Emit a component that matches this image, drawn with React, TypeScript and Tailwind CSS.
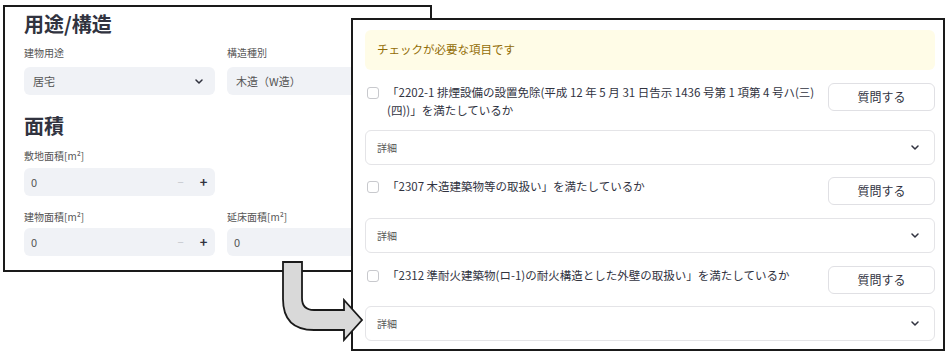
import { ReactNode } from "react";

const font = { fontFamily: '"Noto Sans CJK JP", "Noto Sans", sans-serif' };

function Chevron() {
  return (
    <svg width="8" height="5" viewBox="0 0 8 5" className="shrink-0">
      <path d="M1 1 L4 4 L7 1" fill="none" stroke="#31333f" strokeWidth="1.5" strokeLinecap="round" strokeLinejoin="round" />
    </svg>
  );
}

function Label({ children }: { children: ReactNode }) {
  return <div className="text-[10px] leading-[14px] text-[#555]">{children}</div>;
}

function SelectBox({ value }: { value: string }) {
  return (
    <div className="flex items-center justify-between h-[28px] rounded-md bg-[#f0f2f6] pl-[9px] pr-[12px] text-[11px] text-[#555]">
      <span>{value}</span>
      <Chevron />
    </div>
  );
}

// stepper is left off where the field sits under the other window
function NumberBox({ stepper = true }: { stepper?: boolean }) {
  return (
    <div className="flex items-center h-[28px] rounded-md bg-[#f0f2f6] pl-[7px] text-[11px] text-[#555]">
      <span className="flex-1">0</span>
      {stepper && (
        <div className="flex items-center">
          <span className="w-[23px] text-center text-[#c4c6cc]">−</span>
          <span className="w-[23px] text-center text-[13px] font-bold text-[#31333f]">+</span>
        </div>
      )}
    </div>
  );
}

function Expander() {
  return (
    <div className="flex items-center justify-between h-[35px] rounded-md border border-[#e4e4e7] pl-[11px] pr-[15px]">
      <span className="text-[10px] text-[#555]">詳細</span>
      <Chevron />
    </div>
  );
}

function CheckRow({ children }: { children: ReactNode }) {
  return (
    <div className="flex items-start">
      <div className="mt-[4px] ml-[2px] w-[12px] h-[12px] shrink-0 rounded-[3px] border border-[#c8c9cd] bg-white" />
      <div className="ml-[8px] flex-1 min-w-0 text-[11.5px] leading-[18px] text-[#31333f] whitespace-nowrap">{children}</div>
      <button className="ml-[8px] w-[107px] h-[28px] shrink-0 rounded-md border border-[#e0e0e4] bg-white text-[12px] text-[#31333f]">
        質問する
      </button>
    </div>
  );
}

export default function App() {
  return (
    <div className="relative w-[952px] h-[357px] bg-white overflow-hidden" style={font}>
      {/* input form window */}
      <section className="absolute left-[3px] top-[5px] w-[429px] h-[267px] border-2 border-[#1a1a1a] bg-white overflow-hidden pl-[19px] pt-[3px]">
        <h2 className="text-[20px] leading-[28px] font-bold text-[#31333f]">用途/構造</h2>
        <div className="grid grid-cols-[191px_191px] gap-x-[12px] mt-[8px]">
          <div>
            <Label>建物用途</Label>
            <div className="mt-[7px]">
              <SelectBox value="居宅" />
            </div>
          </div>
          <div>
            <Label>構造種別</Label>
            <div className="mt-[7px]">
              <SelectBox value="木造（W造）" />
            </div>
          </div>
        </div>
        <h2 className="mt-[17px] text-[20px] leading-[28px] font-bold text-[#31333f]">面積</h2>
        <div className="w-[191px] mt-[9px]">
          <Label>敷地面積[m²]</Label>
          <div className="mt-[5px]">
            <NumberBox />
          </div>
        </div>
        <div className="grid grid-cols-[191px_191px] gap-x-[12px] mt-[14px]">
          <div>
            <Label>建物面積[m²]</Label>
            <div className="mt-[4px]">
              <NumberBox />
            </div>
          </div>
          <div>
            <Label>延床面積[m²]</Label>
            <div className="mt-[4px]">
              <NumberBox stepper={false} />
            </div>
          </div>
        </div>
      </section>

      {/* check result window */}
      <section className="absolute left-[351px] top-[18px] w-[594px] h-[333px] border-2 border-[#1a1a1a] bg-white pl-[12px] pr-[8px] pt-[10px] flex flex-col">
        <div className="flex items-center h-[40px] rounded-md bg-[#fffce7] pl-[12px] text-[11.5px] text-[#926c05]">
          チェックが必要な項目です
        </div>
        <div className="mt-[13px]">
          <CheckRow>
            「2202-1 排煙設備の設置免除(平成 12 年 5 月 31 日告示 1436 号第 1 項第 4 号ハ(三)
            <br />
            (四))」を満たしているか
          </CheckRow>
        </div>
        <div className="mt-[11px]">
          <Expander />
        </div>
        <div className="mt-[12px]">
          <CheckRow>「2307 木造建築物等の取扱い」を満たしているか</CheckRow>
        </div>
        <div className="mt-[13px]">
          <Expander />
        </div>
        <div className="mt-[13px]">
          <CheckRow>「2312 準耐火建築物(ロ-1)の耐火構造とした外壁の取扱い」を満たしているか</CheckRow>
        </div>
        <div className="mt-[12px]">
          <Expander />
        </div>
      </section>

      {/* arrow drawn over both windows */}
      <svg className="absolute left-0 top-0 pointer-events-none" width="952" height="357" viewBox="0 0 952 357">
        <path
          d="M283 262 L302 262 L302 298 Q302 310 314 310 L344 310 L344 300 L362 320 L344 340 L344 330 L314 330 Q283 330 283 299 Z"
          fill="#d9d9d9"
          stroke="#1a1a1a"
          strokeWidth="1.8"
          strokeLinejoin="miter"
        />
      </svg>
    </div>
  );
}
